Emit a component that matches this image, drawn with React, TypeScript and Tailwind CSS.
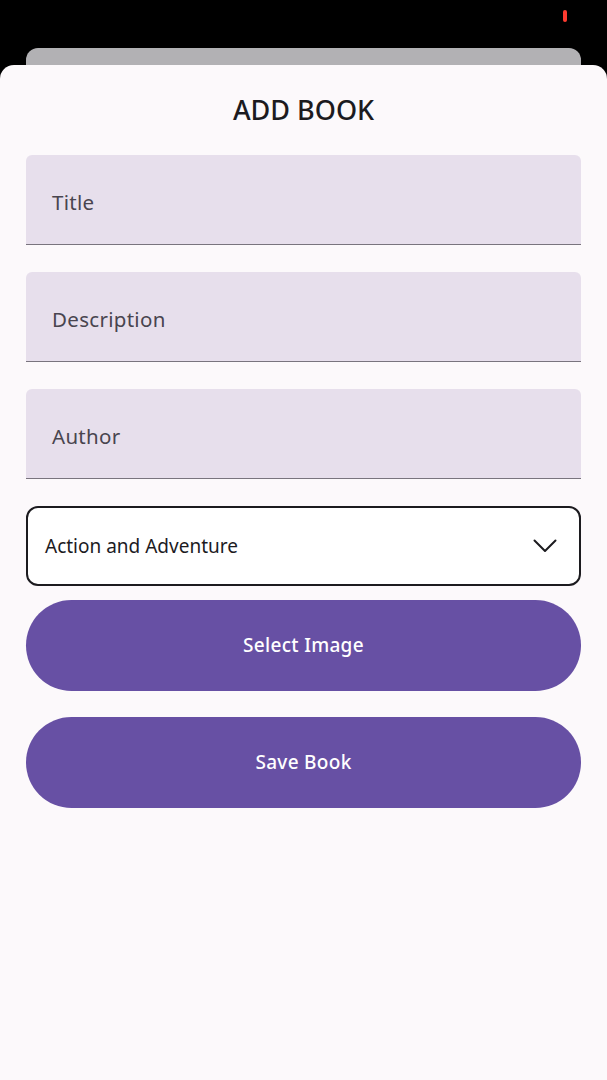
const fields = ["Title", "Description", "Author"];

export default function App() {
  return (
    <div
      className="h-[1080px] w-full bg-black flex flex-col overflow-hidden relative"
      style={{ fontFamily: "'Noto Sans', Roboto, sans-serif" }}
    >
      {/* status bar dot */}
      <div className="absolute left-[563px] top-[10px] h-[12px] w-[4px] rounded-full bg-[#ff3b30]" />

      {/* card behind the sheet */}
      <div className="mt-[48px] mx-[26px] h-[17px] rounded-t-[12px] bg-[#b2b1b4] shrink-0" />

      {/* sheet */}
      <div className="flex-1 rounded-t-[14px] bg-[#fcf9fb] px-[26px] flex flex-col">
        <h1 className="text-center text-[27px] font-medium text-[#1c1b1f] mt-[28px] leading-[34px]">
          ADD BOOK
        </h1>

        <div className="mt-[28px] flex flex-col gap-[27px]">
          {fields.map((f) => (
            <div
              key={f}
              className="h-[90px] rounded-t-[6px] bg-[#e7dfec] border-b-[1.5px] border-[#79747e] flex items-center px-[26px] pt-[6px]"
            >
              <span className="text-[20.5px] text-[#49454f] tracking-[0.3px]">{f}</span>
            </div>
          ))}
        </div>

        <div className="mt-[27px] h-[80px] rounded-[12px] border-2 border-[#1c1b1f] bg-white flex items-center justify-between pl-[17px] pr-[22px]">
          <span className="text-[19px] text-[#1c1b1f]">Action and Adventure</span>
          <svg width="24" height="14" viewBox="0 0 24 14" fill="none">
            <polyline
              points="1.5,1.5 12,12 22.5,1.5"
              stroke="#1c1b1f"
              strokeWidth="2"
              strokeLinecap="round"
              strokeLinejoin="round"
            />
          </svg>
        </div>

        <button className="mt-[14px] h-[91px] rounded-full bg-[#6750a4] text-white text-[19px] font-medium tracking-[0.3px]">
          Select Image
        </button>
        <button className="mt-[26px] h-[91px] rounded-full bg-[#6750a4] text-white text-[19px] font-medium tracking-[0.3px]">
          Save Book
        </button>
      </div>
    </div>
  );
}
